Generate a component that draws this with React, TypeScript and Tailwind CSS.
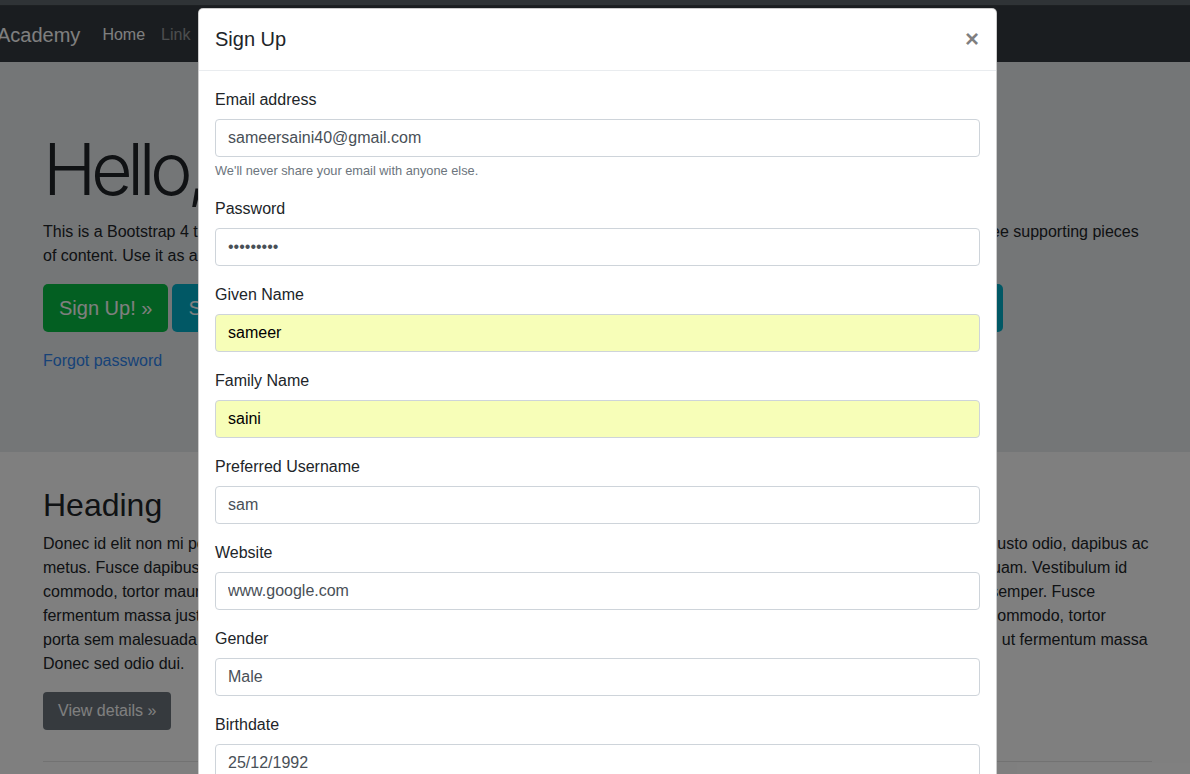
import React from 'react';

type Field = { label: string; value: string; type?: string; autofill?: boolean; help?: string };

const fields: Field[] = [
  { label: 'Email address', value: 'sameersaini40@gmail.com', help: "We'll never share your email with anyone else." },
  { label: 'Password', value: 'secret123', type: 'password' },
  { label: 'Given Name', value: 'sameer', autofill: true },
  { label: 'Family Name', value: 'saini', autofill: true },
  { label: 'Preferred Username', value: 'sam' },
  { label: 'Website', value: 'www.google.com' },
  { label: 'Gender', value: 'Male' },
  { label: 'Birthdate', value: '25/12/1992' },
];

const col1 = [
  'Donec id elit non mi porta gravida at eget',
  'metus. Fusce dapibus, tellus ac cursus',
  'commodo, tortor mauris condimentum nibh, ut',
  'fermentum massa justo sit amet risus. Etiam',
  'porta sem malesuada magna mollis euismod.',
  'Donec sed odio dui.',
];

const col3 = [
  'Donec sed odio dui. Cras justo odio, dapibus ac',
  'facilisis in, egestas eget quam. Vestibulum id',
  'ligula porta felis euismod semper. Fusce',
  'dapibus, tellus ac cursus commodo, tortor',
  'mauris condimentum nibh, ut fermentum massa',
  'justo sit amet risus.',
];

const Column: React.FC<{ lines: string[] }> = ({ lines }) => (
  <div>
    <h2 className="text-[32px] font-medium leading-[38px] mb-2">Heading</h2>
    <p className="mb-4 leading-6 whitespace-nowrap">
      {lines.map((l, i) => (
        <span key={i} className="block">{l}</span>
      ))}
    </p>
    <button className="h-[38px] px-[15px] rounded-[4px] bg-[#6c757d] text-white">View details »</button>
  </div>
);

export default function App() {
  return (
    <div className="relative w-[1190px] h-[774px] overflow-hidden bg-white text-[#212529] text-[16px] font-['Liberation_Sans',Arial,sans-serif]">
      <div className="h-[6px] bg-[#5f666d] border-b border-[#3b4045]" />
      <nav className="h-[56px] pt-[2px] bg-[#343a40] flex items-center">
        <span className="ml-[-3px] mr-[14px] text-[20px] text-white">Academy</span>
        <a className="px-2 text-white">Home</a>
        <a className="px-2 text-white/50">Link</a>
      </nav>

      <section className="h-[390px] bg-[#e9ecef] px-[43px] pt-[64px]">
        <h1 className="text-[72px] font-light leading-[86px] tracking-[-0.075em] mb-2 font-['Inter',sans-serif]">Hello, world!</h1>
        <p className="leading-6 whitespace-nowrap">
          This is a Bootstrap 4 template for a simple marketing or informational website. It includes a large callout called a jumbotron and the three supporting pieces
          <br />
          of content. Use it as a starting point to create something more unique.
        </p>
        <div className="mt-4 flex gap-1 w-[960px]">
          <button className="h-[48px] px-4 rounded-[5px] bg-[#07bf44] text-white text-[20px]">Sign Up! »</button>
          <button className="h-[48px] px-4 rounded-[5px] bg-[#02b1ca] text-white text-[20px]">Sign In »</button>
          <button className="h-[48px] px-4 rounded-[5px] bg-[#02b1ca] text-white text-[20px]">Sign In with Google »</button>
          <button className="flex-1 h-[48px] px-4 rounded-[5px] bg-[#02b1ca] text-white text-[20px]">Sign In with Facebook »</button>
        </div>
        <a className="block mt-[17px] leading-6 text-[#2f86f0]">Forgot password</a>
      </section>

      <main className="px-[43px] pt-[34px] w-[1190px]">
        <div className="grid grid-cols-3 gap-x-[45px] w-[1105px]">
          <Column lines={col1} />
          <div />
          <Column lines={col3} />
        </div>
        <hr className="mt-[31px] w-[1109px] border-black/10" />
      </main>

      <div className="absolute inset-0 bg-black/50" />

      <div className="absolute left-[198px] top-[8px] w-[799px] h-[800px] bg-white rounded-[5px] border border-black/20">
        <div className="flex items-center h-[62px] px-4 pb-[2px] border-b border-[#e9ecef]">
          <h5 className="text-[20px] font-medium leading-[30px]">Sign Up</h5>
          <button className="ml-auto mr-[1px] text-[24px] font-bold leading-none text-black/50">×</button>
        </div>
        <div className="p-4">
          {fields.map(f => (
            <div key={f.label} className="mb-4">
              <label className="block mb-2 leading-6 translate-y-[1px]">{f.label}</label>
              <input
                readOnly
                type={f.type ?? 'text'}
                value={f.value}
                className={`block w-full h-[38px] px-3 rounded-[4px] border border-[#ced4da] outline-none ${f.autofill ? 'bg-[#f7feb8] text-black' : 'bg-white text-[#495057]'}`}
              />
              {f.help && <small className="block mt-1 text-[12.8px] leading-[19px] text-[#6c757d]">{f.help}</small>}
            </div>
          ))}
        </div>
      </div>
    </div>
  );
}
